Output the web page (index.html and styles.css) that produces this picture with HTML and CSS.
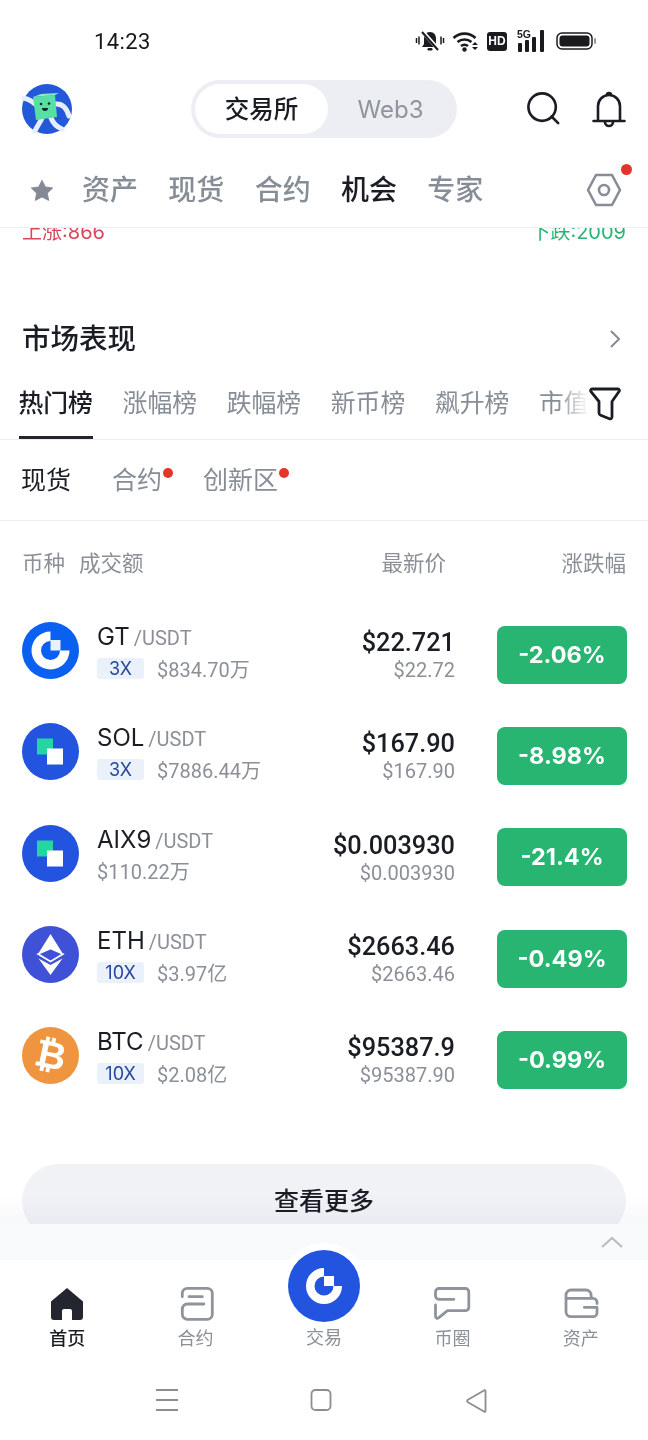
FILE: index.html
```html
<!DOCTYPE html>
<html lang="zh">
<head>
<meta charset="utf-8">
<title>市场表现</title>
<link rel="stylesheet" href="styles.css">
</head>
<body>
<svg class="defs" width="0" height="0" aria-hidden="true">
  <symbol id="coin-square" viewBox="0 0 57 57">
    <circle cx="28.5" cy="28.5" r="28.5" fill="#2354e0"/>
    <rect x="15" y="15.5" width="16" height="16" fill="#25d6a0"/>
    <rect x="25" y="25.5" width="16" height="16" fill="#fff"/>
  </symbol>
</svg>
<div class="phone">
  <div class="status">
    <span class="clock">14:23</span>
    <div class="status-icons">
      <svg width="30" height="24" viewBox="0 0 30 24"><path d="M15 3c-4 0-6 3-6 7v5l-2 3h16l-2-3v-5c0-4-2-7-6-7z" fill="#1b1b1f"/><rect x="12.5" y="19" width="5" height="2.5" rx="1.2" fill="#1b1b1f"/><path d="M7 2l17 19" stroke="#fff" stroke-width="4"/><path d="M7 3l16 18" stroke="#1b1b1f" stroke-width="2"/><path d="M1.5 9v5M4 7.5v8M26 7.5v8M28.5 9v5" stroke="#1b1b1f" stroke-width="1.5"/></svg>
      <svg width="28" height="22" viewBox="0 0 28 22"><path d="M1.5 8a16 16 0 0 1 22 0M5.5 12a11 11 0 0 1 14 0M9 16a6 6 0 0 1 7 0" fill="none" stroke="#1b1b1f" stroke-width="2.6"/><circle cx="12.5" cy="19.5" r="2.2" fill="#1b1b1f"/><path d="M20 15l3-3 3 3zM20 17l3 3 3-3z" fill="#1b1b1f"/></svg>
      <span class="hd">HD</span>
      <svg class="signal" width="30" height="26" viewBox="0 0 30 26"><text x="0" y="10" class="fiveg">5G</text><rect x="1" y="15" width="4" height="9" rx="1" fill="#1b1b1f"/><rect x="8" y="12" width="4" height="12" rx="1" fill="#1b1b1f"/><rect x="15" y="9" width="4" height="15" rx="1" fill="#1b1b1f"/><rect x="23" y="2" width="4" height="22" rx="1" fill="#1b1b1f"/></svg>
      <svg width="41" height="20" viewBox="0 0 41 20"><rect x="1" y="2" width="35" height="16" rx="5" fill="none" stroke="#1b1b1f" stroke-width="1.5"/><rect x="3.5" y="4.5" width="30" height="11" rx="3" fill="#1b1b1f"/><rect x="38" y="7" width="2" height="6" rx="1" fill="#9a9a9a"/></svg>
    </div>
  </div>

  <header class="topbar">
    <svg class="avatar" viewBox="0 0 50 50">
      <circle cx="25" cy="25" r="25" fill="#2358d8"/>
      <path d="M1 14c5 1 9 3 12 6M33 20c8-1 12 5 14 12M20 34c-2 5-5 8-7 13M29 34c2 5 6 9 11 11" fill="none" stroke="#e6edfb" stroke-width="5" stroke-linecap="round"/>
      <path d="M11 13l22-2 2 22-21 3z" fill="#58e0a2"/>
      <path d="M11 13l8-3 18-1-4 2z" fill="#8cedc0"/>
      <circle cx="19" cy="20" r="1.3" fill="#123"/><circle cx="27" cy="19.5" r="1.3" fill="#123"/>
      <path d="M20 24h6a3 3 0 0 1-6 0z" fill="#123"/>
    </svg>
    <div class="switch">
      <span class="switch-on">交易所</span>
      <span class="switch-off">Web3</span>
    </div>
    <div class="top-actions">
      <svg width="34" height="34" viewBox="0 0 36 36"><circle cx="16" cy="16" r="14.5" fill="none" stroke="#1b1d25" stroke-width="2.8"/><path d="M26 26l7 7" stroke="#1b1d25" stroke-width="2.8" stroke-linecap="round"/></svg>
      <svg width="34" height="38" viewBox="0 0 34 38"><path d="M1.5 31h31M6 31V16a11 11 0 0 1 22 0v15" fill="none" stroke="#1b1d25" stroke-width="2.6" stroke-linecap="round"/><path d="M15 5a2 2 0 0 1 4 0" fill="none" stroke="#1b1d25" stroke-width="2.6"/><path d="M13 32a4 4 0 0 0 8 0" fill="none" stroke="#1b1d25" stroke-width="2.6"/></svg>
    </div>
  </header>

  <nav class="cats">
    <svg class="star" width="24" height="24" viewBox="0 0 26 24"><path d="M13 1.5l3.6 7.2 8 1.1-5.8 5.6 1.4 7.9-7.2-3.8-7.2 3.8 1.4-7.9-5.8-5.6 8-1.1z" fill="#838a96" stroke="#838a96" stroke-linejoin="round"/></svg>
    <span class="cat">资产</span><span class="cat">现货</span><span class="cat">合约</span><span class="cat cat-on">机会</span><span class="cat">专家</span>
    <div class="cat-gear">
      <svg width="36" height="36" viewBox="0 0 36 36"><path d="M10 3h16l8 15-8 15H10L2 18z" fill="none" stroke="#878d97" stroke-width="2.6" stroke-linejoin="round"/><circle cx="18" cy="18" r="5" fill="none" stroke="#878d97" stroke-width="2.6"/></svg>
      <i class="gear-dot"></i>
    </div>
  </nav>

  <main class="scroll">
    <div class="updown"><span class="up">上涨:866</span><span class="down">下跌:2009</span></div>

    <div class="sec-head">
      <h2>市场表现</h2>
      <svg width="12" height="20" viewBox="0 0 12 20"><path d="M2 2l8 8-8 8" fill="none" stroke="#858a93" stroke-width="2"/></svg>
    </div>

    <div class="rank">
      <span class="rank-item rank-on">热门榜</span>
      <span class="rank-item">涨幅榜</span>
      <span class="rank-item">跌幅榜</span>
      <span class="rank-item">新币榜</span>
      <span class="rank-item">飙升榜</span>
      <span class="rank-item">市值榜</span>
      <div class="rank-fade">
        <svg width="34" height="36" viewBox="0 0 34 36"><path d="M4 3h26a1.5 1.5 0 0 1 1.2 2.300L24 15.500V31a2 2 0 0 1-2.700 1.800l-8.500-3.500A2.500 2.500 0 0 1 11 27V15.500L2.800 5.300A1.500 1.500 0 0 1 4 3z" fill="none" stroke="#1b1d25" stroke-width="2.800" stroke-linejoin="round"/></svg>
      </div>
    </div>

    <div class="subtabs">
      <span class="sub sub-on">现货</span>
      <span class="sub">合约<i class="dot"></i></span>
      <span class="sub">创新区<i class="dot"></i></span>
    </div>

    <div class="thead">
      <span class="th-coin">币种</span><span class="th-vol">成交额</span>
      <span class="th-price">最新价</span><span class="th-chg">涨跌幅</span>
    </div>

    <div class="row">
      <svg class="coin" viewBox="0 0 57 57"><circle cx="28.5" cy="28.5" r="28.5" fill="#0a60f0"/><path d="M28.5 9.5A19 19 0 1 0 47.5 28.5H38A9.5 9.5 0 1 1 28.5 19z" fill="#fff"/><rect x="28.5" y="18" width="10" height="10.5" fill="#e9f0fe"/></svg>
      <div class="info"><div class="name">GT<span class="pair">/USDT</span></div><div class="meta"><span class="lev">3X</span><span class="vol">$834.70万</span></div></div>
      <div class="price"><b>$22.721</b><span>$22.72</span></div>
      <span class="chg">-2.06%</span>
    </div>
    <div class="row">
      <svg class="coin"><use href="#coin-square"/></svg>
      <div class="info"><div class="name">SOL<span class="pair">/USDT</span></div><div class="meta"><span class="lev">3X</span><span class="vol">$7886.44万</span></div></div>
      <div class="price"><b>$167.90</b><span>$167.90</span></div>
      <span class="chg">-8.98%</span>
    </div>
    <div class="row">
      <svg class="coin"><use href="#coin-square"/></svg>
      <div class="info"><div class="name">AIX9<span class="pair">/USDT</span></div><div class="meta"><span class="vol">$110.22万</span></div></div>
      <div class="price"><b>$0.003930</b><span>$0.003930</span></div>
      <span class="chg">-21.4%</span>
    </div>
    <div class="row">
      <svg class="coin" viewBox="0 0 57 57"><circle cx="28.5" cy="28.5" r="28.5" fill="#3f51d6"/><path d="M28.5 8L16 28l12.5-5.5L41 28z" fill="#fff"/><path d="M16 28l12.5 7.5L41 28l-12.5-5.5z" fill="#3f51d6" stroke="#fff" stroke-width="1.6"/><path d="M16.5 32.5l12 6.5 12-6.5-12 16.5z" fill="#fff"/></svg>
      <div class="info"><div class="name">ETH<span class="pair">/USDT</span></div><div class="meta"><span class="lev">10X</span><span class="vol">$3.97亿</span></div></div>
      <div class="price"><b>$2663.46</b><span>$2663.46</span></div>
      <span class="chg">-0.49%</span>
    </div>
    <div class="row">
      <svg class="coin" viewBox="0 0 57 57"><circle cx="28.5" cy="28.5" r="28.5" fill="#ef953f"/><text x="28.5" y="41" text-anchor="middle" transform="rotate(12 28.5 28.5)" class="btc">₿</text></svg>
      <div class="info"><div class="name">BTC<span class="pair">/USDT</span></div><div class="meta"><span class="lev">10X</span><span class="vol">$2.08亿</span></div></div>
      <div class="price"><b>$95387.9</b><span>$95387.90</span></div>
      <span class="chg">-0.99%</span>
    </div>

    <div class="more">查看更多</div>
    <div class="veil"></div>
  </main>

  <div class="strip">
    <svg width="24" height="14" viewBox="0 0 24 14"><path d="M2 12L12 3l10 9" fill="none" stroke="#b9bdc4" stroke-width="2.2"/></svg>
  </div>

  <footer class="tabbar">
    <div class="tab tab-on">
      <svg width="34" height="34" viewBox="0 0 34 34"><path d="M17 1L1 14.5V30a3 3 0 0 0 3 3h8V24a2 2 0 0 1 2-2h6a2 2 0 0 1 2 2v9h8a3 3 0 0 0 3-3V14.5z" fill="#23252f"/></svg>
      <span>首页</span>
    </div>
    <div class="tab">
      <svg class="tab-icon" width="34" height="34" viewBox="0 0 34 34"><path d="M3.3 9.7V6.3a5 5 0 0 1 5-5h20a5 5 0 0 1 5 5v21a5 5 0 0 1-5 5h-20a5 5 0 0 1-5-5V22a5 5 0 0 1 5-5h16.600M10 9.700h13.300" fill="none" stroke="#8f949c" stroke-width="2.800" stroke-linecap="round"/></svg>
      <span>合约</span>
    </div>
    <div class="tab tab-mid">
      <div class="mid-halo">
        <svg width="72" height="72" viewBox="0 0 72 72"><circle cx="36" cy="36" r="36" fill="#2354e0"/><path d="M36 18A18 18 0 1 0 54 36H45.5A9.5 9.5 0 1 1 36 26.5z" fill="#fff"/><rect x="36" y="26" width="10" height="10" fill="#fff"/></svg>
      </div>
      <span class="mid-label">交易</span>
    </div>
    <div class="tab">
      <svg class="tab-icon" width="36" height="34" viewBox="0 0 36 34"><path d="M19.800 12.300H5A3.500 3.500 0 0 1 1.500 8.800V5A3.500 3.500 0 0 1 5 1.500h26.300A3.500 3.500 0 0 1 34.800 5v15.200a3.500 3.500 0 0 1-3.500 3.500H13.500l-9 7.100a1.800 1.800 0 0 1-3-1.300V18" fill="none" stroke="#8f949c" stroke-width="2.800" stroke-linecap="round" stroke-linejoin="round"/></svg>
      <span>币圈</span>
    </div>
    <div class="tab">
      <svg class="tab-icon" width="34" height="34" viewBox="0 0 34 34"><path d="M2 11.300V8a5 5 0 0 1 5-5h15a5 5 0 0 1 5 5l.5 3.300M2 8v16.700a5 5 0 0 0 5 5h22a4 4 0 0 0 4-4v-5.400H20.300M2 11.300h27a4 4 0 0 1 4 4v1.200" fill="none" stroke="#8f949c" stroke-width="2.800" stroke-linecap="round" stroke-linejoin="round"/></svg>
      <span>资产</span>
    </div>
  </footer>

  <div class="sysnav">
    <svg width="24" height="24" viewBox="0 0 24 24"><path d="M1 2h22M1 12h22M1 22h22" stroke="#8b8d92" stroke-width="1.8"/></svg>
    <svg width="22" height="24" viewBox="0 0 22 24"><rect x="1.5" y="2" width="19" height="20" rx="4" fill="none" stroke="#8b8d92" stroke-width="1.8"/></svg>
    <svg class="sys-back" width="22" height="26" viewBox="0 0 22 26"><path d="M19 2.500a.8.800 0 0 1 1.500.500v20a.8.800 0 0 1-1.500.500L2.500 14a1.500 1.500 0 0 1 0-2z" fill="none" stroke="#8b8d92" stroke-width="1.800" stroke-linejoin="round"/></svg>
  </div>
</div>
</body>
</html>
```

FILE: styles.css
```css
* { box-sizing: border-box; }
html, body { margin: 0; padding: 0; background: #fff; }
body { font-family: Inter, "Noto Sans CJK SC", sans-serif; color: #1b1d25; }
.defs { position: absolute; }
.phone { width: 648px; height: 1440px; overflow: hidden; display: flex; flex-direction: column; background: #fff; }

.status { height: 80px; flex: none; display: flex; align-items: flex-start; justify-content: space-between; padding: 27px 51px 0 94px; }
.clock { font: 22px/28px Roboto, sans-serif; letter-spacing: .4px; color: #17181c; margin-top: 1px; }
.status-icons { display: flex; align-items: center; gap: 7px; height: 28px; }
.hd { width: 20px; height: 19px; border-radius: 3px; background: #1b1b1f; color: #fff; font: 700 12px/19px "Liberation Sans", sans-serif; text-align: center; margin-right: 3px; }
.signal { margin-right: 2px; }
.fiveg { font: 700 10.5px "Liberation Sans", sans-serif; fill: #1b1b1f; }

.topbar { height: 58px; flex: none; display: flex; align-items: center; padding: 0 22px; }
.avatar { width: 50px; height: 50px; flex: none; margin-right: 119px; }
.switch { width: 266px; height: 58px; border-radius: 29px; background: #eceef3; padding: 4px; display: flex; align-items: center; flex: none; }
.switch-on { width: 133px; height: 50px; border-radius: 25px; background: #fff; display: flex; align-items: center; justify-content: center; font: 500 24.5px/50px Inter, "Noto Sans CJK SC", sans-serif; }
.switch-off { flex: 1; text-align: center; color: #8f949f; font-size: 24px; }
.top-actions { display: flex; align-items: center; gap: 31px; margin-left: 70px; }

.cats { height: 90px; flex: none; display: flex; align-items: center; padding: 15px 0 0 30px; border-bottom: 1px solid #eceef1; position: relative; }
.star { margin-right: 28px; flex: none; }
.cat { font-size: 28px; font-weight: 500; color: #878d97; margin-right: 30.3px; line-height: 40px; }
.cat-on { color: #1b1d25; }
.cat-gear { margin-left: auto; margin-right: 26px; position: relative; display: flex; }
.gear-dot { position: absolute; right: -10px; top: -8px; width: 11px; height: 11px; border-radius: 50%; background: #e5352b; }

.scroll { height: 996px; flex: none; overflow: hidden; position: relative; }
.updown { display: flex; justify-content: space-between; padding: 0 22px; margin-top: -9px; height: 26px; font-size: 20px; line-height: 26px; }
.up { color: #d8475c; }
.down { color: #27b571; }

.sec-head { display: flex; align-items: center; justify-content: space-between; padding: 0 27px 0 22px; margin-top: 74px; height: 40px; }
.sec-head h2 { margin: 0; font-size: 28.5px; font-weight: 500; line-height: 40px; }

.rank { display: flex; gap: 29.7px; padding-left: 18.5px; margin-top: 24px; height: 57px; border-bottom: 1px solid #eceef1; position: relative; overflow: hidden; white-space: nowrap; }
.rank-item { font-size: 24.8px; line-height: 34px; height: 56px; color: #878d97; flex: none; padding-top: 3px; }
.rank-on { color: #1b1d25; font-weight: 500; border-bottom: 3px solid #23252f; }
.rank-fade { position: absolute; right: 0; top: 0; bottom: 1px; width: 90px; padding: 3px 0 0 30px; background: linear-gradient(90deg, rgba(255,255,255,0), #fff 34%); }

.subtabs { display: flex; gap: 41px; padding-left: 21px; height: 81px; align-items: center; border-bottom: 1px solid #eceef1; }
.sub { font-size: 25px; color: #878d97; position: relative; line-height: 34px; }
.sub-on { color: #1b1d25; }
.dot { position: absolute; right: -11px; top: 5px; width: 10px; height: 10px; border-radius: 50%; background: #e5352b; }

.thead { display: flex; align-items: center; height: 34px; margin-top: 23px; padding: 0 22px; font-size: 21.5px; color: #8b8f97; }
.th-vol { margin-left: 14px; }
.th-price { margin-left: auto; margin-right: 115.5px; }

.row { height: 101.3px; display: flex; align-items: center; padding: 0 21px 0 22px; }
.thead + .row { margin-top: 22px; }
.coin { width: 57px; height: 57px; flex: none; margin-right: 18px; }
.btc { font: 700 38px "DejaVu Sans", sans-serif; fill: #fff; }
.info { flex: 1; min-width: 0; margin-top: 2px; }
.name { font-size: 24px; line-height: 30px; color: #1b1d25; }
.pair { font: 20px Roboto, "Noto Sans CJK SC", sans-serif; color: #8b8f97; margin-left: 4px; }
.meta { display: flex; align-items: center; height: 26px; margin-top: 3px; }
.lev { width: 47px; height: 21px; border-radius: 3px; background: #ebf1fb; color: #27479c; font-size: 18px; line-height: 22px; text-align: center; margin-right: 13px; }
.vol { font: 20px Roboto, "Noto Sans CJK SC", sans-serif; color: #8b8f97; }
.price { display: flex; flex-direction: column; align-items: flex-end; margin: 10px 42px 0 0; font-family: Roboto, sans-serif; }
.price b { font-weight: 500; font-size: 25.3px; line-height: 29px; }
.price span { font-size: 20px; line-height: 26px; color: #8b8f97; }
.chg { width: 130px; height: 58px; border-radius: 8px; background: #27b571; color: #fff; font-size: 23.5px; font-weight: 700; line-height: 58px; text-align: center; flex: none; margin-top: 8px; }

.more { margin: 58px 22px 0; height: 74px; border-radius: 37px; background: #f1f2f6; text-align: center; font-size: 25px; font-weight: 500; line-height: 74px; }
.veil { position: absolute; left: 0; right: 0; bottom: 0; height: 30px; background: linear-gradient(180deg, #fff, #f7f8fa); mix-blend-mode: multiply; pointer-events: none; }

.strip { height: 36px; flex: none; background: #f9fafb; display: flex; justify-content: flex-end; align-items: center; padding-right: 24px; }

.tabbar { height: 100px; flex: none; display: flex; padding: 27px 3px 0; background: #fff; }
.tab { flex: 1; display: flex; flex-direction: column; align-items: center; gap: 5px; color: #8b8f97; font-size: 18px; line-height: 26px; position: relative; }
.tab-icon { overflow: visible; }
.tab-on { color: #1b1d25; font-weight: 500; }
.tab-mid { padding-top: 38px; }
.mid-label { position: relative; }
.mid-halo { position: absolute; top: -44px; left: 50%; margin-left: -43px; width: 86px; height: 86px; border-radius: 50%; background: #fff; display: flex; align-items: center; justify-content: center; }

.sysnav { flex: 1; display: flex; align-items: flex-start; padding: 28px 0 0 155px; gap: 131px; }
.sys-back { margin-left: 2px; }
```
